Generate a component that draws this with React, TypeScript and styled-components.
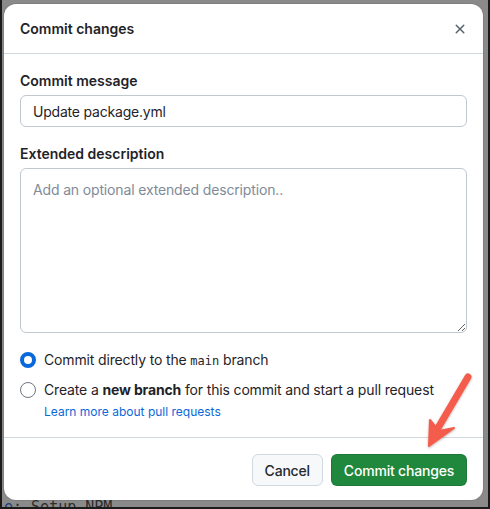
import React from "react";
import styled, { createGlobalStyle } from "styled-components";

const Global = createGlobalStyle`
  html, body { margin: 0; padding: 0; }
  body {
    width: 490px;
    height: 509px;
    overflow: hidden;
    background: #1b1b1b;
    font-family: Inter, "Liberation Sans", sans-serif;
    color: #1f2328;
  }
  * { box-sizing: border-box; }
`;

const Backdrop = styled.div`
  position: relative;
  width: 490px;
  height: 509px;
  border: 2px solid #1b1b1b;
  border-top: none;
  background: #8a8a8a;
  display: flex;
  flex-direction: column;
  padding: 4px 5px 0 2px;
  overflow: hidden;
`;

const Dialog = styled.div`
  flex: none;
  width: 479px;
  background: #ffffff;
  border-radius: 12px;
  display: flex;
  flex-direction: column;
  box-shadow: 0 0 0 1px rgba(0,0,0,0.08);
`;

const Header = styled.div`
  display: flex;
  align-items: center;
  justify-content: space-between;
  height: 50px;
  padding: 1px 7px 0 16px;
  border-bottom: 1px solid #d1d9e0;
`;

const Title = styled.h1`
  margin: 0;
  font-size: 14px;
  font-weight: 600;
  line-height: 20px;
`;

const CloseButton = styled.button`
  width: 32px;
  height: 32px;
  border: none;
  background: transparent;
  display: flex;
  align-items: center;
  justify-content: center;
  color: #59636e;
  padding: 0;
`;

const Body = styled.div`
  display: flex;
  flex-direction: column;
  padding: 17px 16px 16px;
`;

const Field = styled.div<{ $gap?: number }>`
  display: flex;
  flex-direction: column;
  gap: 4px;
  margin-bottom: ${(p) => p.$gap ?? 0}px;
`;

const Label = styled.label`
  font-size: 14px;
  font-weight: 600;
  line-height: 20px;
`;

const TextInput = styled.input`
  height: 32px;
  width: 100%;
  border: 1px solid #c1c8d0;
  border-radius: 6px;
  padding: 0 12px;
  font-family: inherit;
  font-size: 14px;
  letter-spacing: -0.2px;
  color: #1f2328;
  outline: none;
`;

const TextArea = styled.textarea`
  height: 165px;
  width: 100%;
  border: 1px solid #c1c8d0;
  border-radius: 6px;
  padding: 11px 12px;
  font-family: inherit;
  font-size: 14px;
  letter-spacing: -0.15px;
  line-height: 20px;
  color: #1f2328;
  resize: both;
  outline: none;
  &::placeholder { color: #818b98; }
`;

const Options = styled.div`
  display: flex;
  flex-direction: column;
  gap: 9px;
  margin-top: 17px;
`;

const OptionRow = styled.div`
  display: flex;
  align-items: flex-start;
  gap: 8px;
`;

const Radio = styled.span<{ $checked?: boolean }>`
  flex: none;
  width: 16px;
  height: 16px;
  margin-top: 2px;
  border-radius: 50%;
  background: #fff;
  border: ${(p) => (p.$checked ? "4px solid #0969da" : "1px solid #6e7781")};
`;

const OptionText = styled.div`
  display: flex;
  flex-direction: column;
  font-size: 14px;
  line-height: 20px;
  letter-spacing: -0.15px;
`;

const Code = styled.code`
  font-family: "DejaVu Sans Mono", "Liberation Mono", monospace;
  font-size: 12px;
  letter-spacing: 0;
`;

const Link = styled.a`
  color: #0969da;
  font-size: 12px;
  line-height: 18px;
  letter-spacing: 0;
  margin-top: 3px;
  text-decoration: none;
`;

const Footer = styled.div`
  display: flex;
  justify-content: flex-end;
  gap: 8px;
  padding: 16px 16px 14px;
  border-top: 1px solid #d1d9e0;
`;

const Button = styled.button<{ $primary?: boolean }>`
  height: 32px;
  padding: 0 12px;
  border-radius: 6px;
  font-family: inherit;
  font-size: 14px;
  font-weight: 500;
  letter-spacing: -0.2px;
  border: 1px solid ${(p) => (p.$primary ? "rgba(31,35,40,0.15)" : "#d1d9e0")};
  background: ${(p) => (p.$primary ? "#1f883d" : "#f6f8fa")};
  color: ${(p) => (p.$primary ? "#ffffff" : "#25292e")};
`;

const BehindText = styled.div`
  font-family: "DejaVu Sans Mono", monospace;
  font-size: 15px;
  line-height: 15px;
  color: #2e2e2e;
  margin-top: 0px;
  white-space: nowrap;
  & span { color: #1d3f7a; }
`;

const Arrow = styled.svg`
  position: absolute;
  left: 410px;
  top: 360px;
  width: 80px;
  height: 100px;
  pointer-events: none;
`;

export default function App() {
  return (
    <>
      <Global />
      <Backdrop>
        <Dialog>
          <Header>
            <Title>Commit changes</Title>
            <CloseButton aria-label="Close">
              <svg width="16" height="16" viewBox="0 0 16 16" fill="currentColor">
                <path d="M3.72 3.72a.75.75 0 0 1 1.06 0L8 6.94l3.22-3.22a.749.749 0 0 1 1.275.326.749.749 0 0 1-.215.734L9.06 8l3.22 3.22a.749.749 0 0 1-.326 1.275.749.749 0 0 1-.734-.215L8 9.06l-3.22 3.22a.751.751 0 0 1-1.042-.018.751.751 0 0 1-.018-1.042L6.94 8 3.72 4.780a.75.75 0 0 1 0-1.06Z" />
              </svg>
            </CloseButton>
          </Header>
          <Body>
            <Field $gap={17}>
              <Label>Commit message</Label>
              <TextInput readOnly value="Update package.yml" />
            </Field>
            <Field>
              <Label>Extended description</Label>
              <TextArea placeholder="Add an optional extended description.." />
            </Field>
            <Options>
              <OptionRow>
                <Radio $checked />
                <OptionText>
                  <span>
                    Commit directly to the <Code>main</Code> branch
                  </span>
                </OptionText>
              </OptionRow>
              <OptionRow>
                <Radio />
                <OptionText>
                  <span>
                    Create a <b>new branch</b> for this commit and start a pull request
                  </span>
                  <Link href="#">Learn more about pull requests</Link>
                </OptionText>
              </OptionRow>
            </Options>
          </Body>
          <Footer>
            <Button>Cancel</Button>
            <Button $primary>Commit changes</Button>
          </Footer>
        </Dialog>
        <BehindText>
          <span>e</span>: Setup NPM
        </BehindText>
        <Arrow viewBox="410 360 80 100">
          <defs>
            <filter id="sh" x="-20%" y="-20%" width="140%" height="140%">
              <feDropShadow dx="0" dy="1" stdDeviation="1" floodOpacity="0.3" />
            </filter>
          </defs>
          <g filter="url(#sh)" fill="#f45b4b" stroke="#f45b4b" strokeLinecap="round" strokeLinejoin="round">
            <line x1="466" y1="377" x2="436" y2="428" strokeWidth="7" />
            <path d="M427 446 L428 420 L437 431 L452 428 Z" strokeWidth="2" />
          </g>
        </Arrow>
      </Backdrop>
    </>
  );
}
